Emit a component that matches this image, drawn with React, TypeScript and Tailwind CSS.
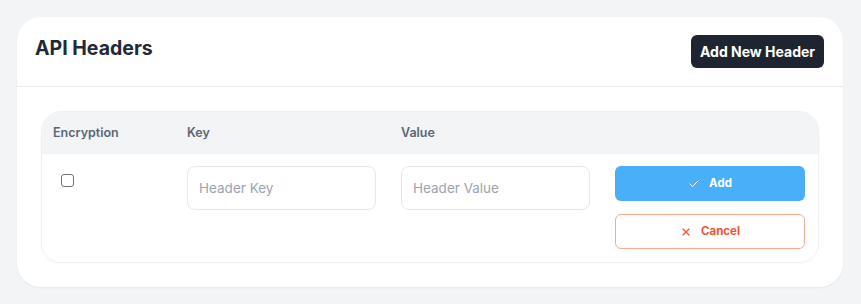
import React from "react";

export default function App() {
  return (
    <div className="min-h-[304px] w-full bg-[#f3f4f6] p-[17px] font-['Inter',sans-serif]">
      <div className="w-[826px] rounded-3xl bg-white shadow-[0_1px_2px_rgba(0,0,0,0.05)]">
        <div className="flex h-[70px] items-center justify-between border-b border-[#e8eaed] pl-[18px] pr-[19px]">
          <h2 className="-mt-[6px] text-[19.5px] font-bold text-[#1f2937]">API Headers</h2>
          <button className="h-[33px] rounded-md bg-[#1e2530] px-[9px] text-[14px] font-bold text-white">
            Add New Header
          </button>
        </div>
        <div className="px-6 pb-6 pt-6">
          <div className="overflow-hidden rounded-[20px] border border-[#eef0f2] shadow-[0_1px_2px_rgba(0,0,0,0.03)]">
            <div className="grid h-[42px] grid-cols-[109px_189px_189px_190px] items-center gap-x-[25px] bg-[#f3f4f6] pl-[11px] text-[12.5px] font-semibold text-[#5b6675]">
              <div>Encryption</div>
              <div>Key</div>
              <div>Value</div>
              <div></div>
            </div>
            <div className="grid grid-cols-[109px_189px_189px_190px] items-start gap-x-[25px] bg-white pb-[13px] pl-[11px] pt-[12px]">
              <div className="pl-2 pt-2">
                <input type="checkbox" className="block h-[13px] w-[13px] appearance-none rounded-[3px] border border-[#6b7280] bg-white" />
              </div>
              <input
                placeholder="Header Key"
                className="h-[44px] rounded-lg border border-[#e5e7eb] px-[11px] text-[13.5px] text-gray-700 outline-none placeholder:text-[#9ca3af]"
              />
              <input
                placeholder="Header Value"
                className="h-[44px] rounded-lg border border-[#e5e7eb] px-[11px] text-[13.5px] text-gray-700 outline-none placeholder:text-[#9ca3af]"
              />
              <div className="flex flex-col gap-[13px]">
                <button className="flex h-[35px] items-center justify-center gap-[9px] rounded-md bg-[#4aaff9] text-[11.5px] font-bold text-white">
                  <svg width="12" height="12" viewBox="0 0 24 24" fill="none" stroke="currentColor" strokeWidth="2" strokeLinecap="round" strokeLinejoin="round">
                    <path d="M20 6 9 17l-5-5" />
                  </svg>
                  Add
                </button>
                <button className="flex h-[35px] items-center justify-center gap-[9px] rounded-md border border-[#fba594] bg-white text-[11.5px] font-bold text-[#f4522d]">
                  <svg width="12" height="12" viewBox="0 0 24 24" fill="none" stroke="currentColor" strokeWidth="2.4" strokeLinecap="round" strokeLinejoin="round">
                    <path d="M18 6 6 18" />
                    <path d="m6 6 12 12" />
                  </svg>
                  Cancel
                </button>
              </div>
            </div>
          </div>
        </div>
      </div>
    </div>
  );
}
